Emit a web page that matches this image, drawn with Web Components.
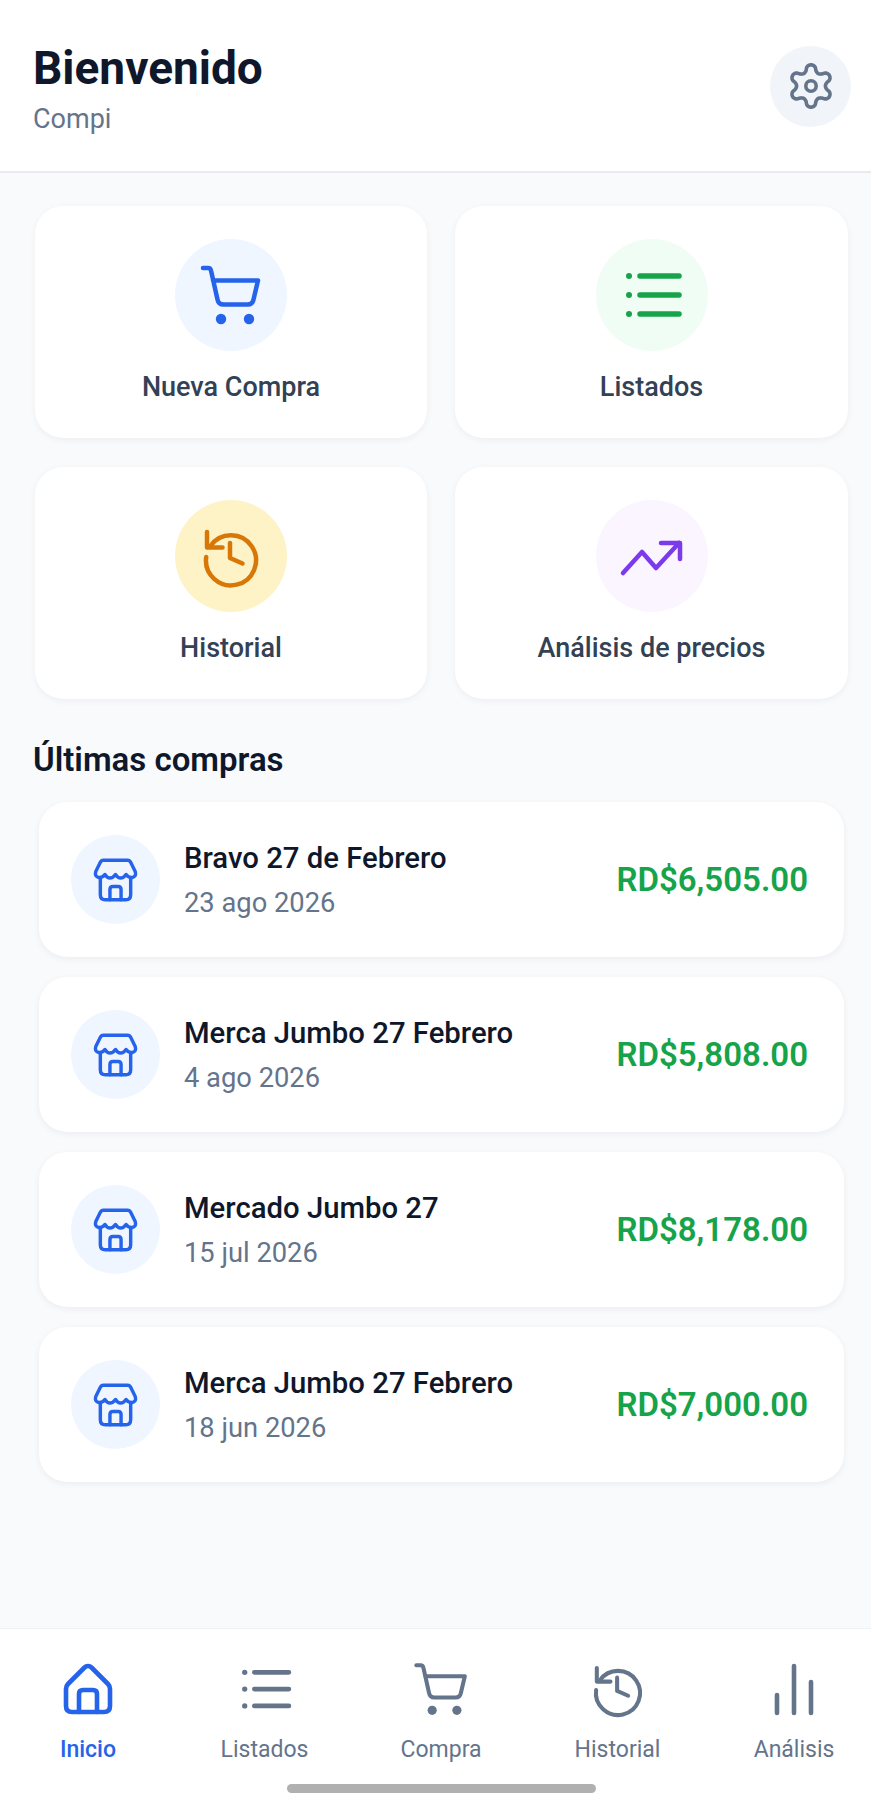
<!DOCTYPE html>
<html lang="es">
<head>
<meta charset="utf-8">
<title>Compi</title>
<style>
  html, body { margin: 0; height: 100%; }
  body { font-family: Roboto, "Liberation Sans", sans-serif; background: #f9fafc; color: #0f172a; }
</style>
</head>
<body>
<app-shell>
  <app-header slot="header" title="Bienvenido" subtitle="Compi"></app-header>

  <action-grid>
    <action-card icon="cart" tone="blue">Nueva Compra</action-card>
    <action-card icon="list" tone="green">Listados</action-card>
    <action-card icon="history" tone="amber">Historial</action-card>
    <action-card icon="trend" tone="purple">Análisis de precios</action-card>
  </action-grid>

  <purchase-list heading="Últimas compras">
    <purchase-row><span slot="name">Bravo 27 de Febrero</span><span slot="date">23 ago 2026</span><span slot="price">RD$6,505.00</span></purchase-row>
    <purchase-row><span slot="name">Merca Jumbo 27 Febrero</span><span slot="date">4 ago 2026</span><span slot="price">RD$5,808.00</span></purchase-row>
    <purchase-row><span slot="name">Mercado Jumbo 27</span><span slot="date">15 jul 2026</span><span slot="price">RD$8,178.00</span></purchase-row>
    <purchase-row><span slot="name">Merca Jumbo 27 Febrero</span><span slot="date">18 jun 2026</span><span slot="price">RD$7,000.00</span></purchase-row>
  </purchase-list>

  <bottom-nav slot="footer">
    <nav-item icon="home" active>Inicio</nav-item>
    <nav-item icon="list">Listados</nav-item>
    <nav-item icon="cart">Compra</nav-item>
    <nav-item icon="history">Historial</nav-item>
    <nav-item icon="bars">Análisis</nav-item>
  </bottom-nav>
</app-shell>

<script>
// rounded six lobe gear, traced in polar form
function gearPath(cx, cy) {
  let d = ''
  for (let i = 0; i < 144; i++) {
    const t = i / 144 * Math.PI * 2
    const c = Math.cos(6 * t)
    const r = 17.8 + 3.4 * Math.sign(c) * Math.pow(Math.abs(c), 0.6)
    const x = cx + r * Math.sin(t)
    const y = cy - r * Math.cos(t)
    d += (i ? 'L' : 'M') + x.toFixed(2) + ' ' + y.toFixed(2)
  }
  return d + 'Z'
}

const icons = {
  cart: {
    view: '0 0 112 112',
    navView: '22 23 68 68',
    body: `<path d="M28 29h5q2.500 0 3 2.500l6.500 29q1 5 6 5h24q5 0 6-5l4.500-19H38"/>
      <circle class="dot" cx="46" cy="80" r="5.200"/><circle class="dot" cx="74" cy="80" r="5.200"/>`
  },
  list: {
    view: '0 0 112 112',
    navView: '22 23 68 68',
    body: `<path style="stroke-width:5.500" d="M44 37h39M44 56h39M44 75h39"/>
      <circle class="dot" cx="33" cy="37" r="3"/><circle class="dot" cx="33" cy="56" r="3"/><circle class="dot" cx="33" cy="75" r="3"/>`
  },
  history: {
    view: '0 0 112 112',
    navView: '22 23 68 68',
    body: `<path d="M35.500 46A25 25 0 1 1 31.200 57"/>
      <path d="M32 32v15.500h15.500"/><path d="M55 43v15l12.500 5.500"/>`
  },
  trend: {
    view: '0 0 112 112',
    body: '<path d="M27 73l19-21 14 16 23-25"/><path d="M65 43h19v16"/>'
  },
  store: {
    view: '0 0 88 88',
    body: `<path d="M32 25h24q2 0 3 2l4.500 9q1.500 5-3 6-3.500.5-6-3-2.500 3.500-5.500 3.500t-5-3.500q-2.500 3.500-5.500 3.500t-5-3.500q-2.500 3.500-6 3-4.500-1-3-6l4.500-9q1-2 3-2Z"/>
      <path d="M29 43v16q0 5 5 5h20q5 0 5-5V43"/>
      <path d="M38.500 64V54q0-3 3-3h5q3 0 3 3v10"/>`
  },
  home: {
    view: '0 0 60 60',
    body: `<path d="M26.500 7.500a5 5 0 0 1 7 0L50 24q2 2 2 5v17q0 6-6 6H14q-6 0-6-6V29q0-3 2-5Z"/>
      <path d="M21 52V34q0-4 4-4h10q4 0 4 4v18"/>`
  },
  bars: {
    view: '0 0 60 60',
    body: '<path d="M13 35v18M30 6v47M47 22v31"/>'
  },
  gear: {
    view: '0 0 60 60',
    body: `<path d="${gearPath(30, 30)}"/><circle cx="30" cy="30" r="5.200"/>`
  }
}

customElements.define('app-icon', class extends HTMLElement {
  connectedCallback() {
    const icon = icons[this.getAttribute('name')]
    const view = this.hasAttribute('nav') && icon.navView ? icon.navView : icon.view
    this.attachShadow({ mode: 'open' }).innerHTML = `
      <style>
        :host { display: block; width: var(--icon-size, 60px); height: var(--icon-size, 60px); }
        svg {
          display: block; width: 100%; height: 100%; fill: none;
          stroke: var(--icon-color, #64748b);
          stroke-width: var(--icon-stroke, 4);
          stroke-linecap: round; stroke-linejoin: round;
        }
        .dot { fill: var(--icon-color, #64748b); stroke: none; }
      </style>
      <svg viewBox="${view}" aria-hidden="true">${icon.body}</svg>`
  }
})

const shellTemplate = document.createElement('template')
shellTemplate.innerHTML = `
<style>
  :host { display: flex; flex-direction: column; height: 1806px; overflow: hidden; }
  main { flex: 1; padding: 33px 22px 0 35px; }
</style>
<slot name="header"></slot>
<main><slot></slot></main>
<slot name="footer"></slot>`

customElements.define('app-shell', class extends HTMLElement {
  constructor() {
    super()
    this.attachShadow({ mode: 'open' })
    this.shadowRoot.appendChild(shellTemplate.content.cloneNode(true))
  }
})

customElements.define('app-header', class extends HTMLElement {
  connectedCallback() {
    this.attachShadow({ mode: 'open' }).innerHTML = `
      <style>
        :host {
          display: flex; align-items: center; justify-content: space-between;
          height: 171px; padding: 0 20px 0 33px; box-sizing: content-box;
          background: #fff; border-bottom: 2px solid #e8eaee;
        }
        h1 { margin: 0; font-size: 46px; line-height: 54px; font-weight: 700; color: #0f172a; }
        p { margin: 8px 0 0; font-size: 27px; line-height: 32px; color: #64748b; }
        .gear {
          width: 81px; height: 81px; border-radius: 50%; background: #f1f5f9;
          margin-top: 1px;
          display: flex; align-items: center; justify-content: center;
          --icon-size: 60px; --icon-stroke: 3.6; --icon-color: #64748b;
        }
        .text { padding-top: 4px; }
      </style>
      <div class="text">
        <h1>${this.getAttribute('title')}</h1>
        <p>${this.getAttribute('subtitle')}</p>
      </div>
      <div class="gear"><app-icon name="gear"></app-icon></div>`
  }
})

customElements.define('action-grid', class extends HTMLElement {
  constructor() {
    super()
    this.attachShadow({ mode: 'open' }).innerHTML = `
      <style>
        :host { display: grid; grid-template-columns: 392px 393px; gap: 28.500px 28px; }
      </style>
      <slot></slot>`
  }
})

const tones = {
  blue: ['#eff6ff', '#2563eb'],
  green: ['#f0fdf4', '#16a34a'],
  amber: ['#fef3c7', '#d97706'],
  purple: ['#faf5ff', '#7c3aed']
}

customElements.define('action-card', class extends HTMLElement {
  connectedCallback() {
    const [bg, fg] = tones[this.getAttribute('tone')]
    this.attachShadow({ mode: 'open' }).innerHTML = `
      <style>
        :host {
          display: flex; flex-direction: column; align-items: center;
          height: 232px; padding-top: 33px; box-sizing: border-box;
          background: #fff; border-radius: 28px;
          box-shadow: 0 2px 7px rgba(15, 23, 42, .05);
        }
        .bubble { width: 112px; height: 112px; border-radius: 50%; background: ${bg}; --icon-size: 112px; --icon-color: ${fg}; --icon-stroke: 4.5; }
        .label { margin-top: 20px; font-size: 27px; line-height: 32px; font-weight: 500; color: #334155; white-space: nowrap; }
      </style>
      <div class="bubble"><app-icon name="${this.getAttribute('icon')}"></app-icon></div>
      <div class="label"><slot></slot></div>`
  }
})

customElements.define('purchase-list', class extends HTMLElement {
  connectedCallback() {
    this.attachShadow({ mode: 'open' }).innerHTML = `
      <style>
        :host { display: block; margin-left: -2px; }
        h2 { margin: 43px 0 24px; font-size: 33px; line-height: 36px; font-weight: 600; color: #0f172a; }
        .rows { display: flex; flex-direction: column; gap: 20px; margin-left: 6px; }
      </style>
      <h2>${this.getAttribute('heading')}</h2>
      <div class="rows"><slot></slot></div>`
  }
})

customElements.define('purchase-row', class extends HTMLElement {
  constructor() {
    super()
    this.attachShadow({ mode: 'open' }).innerHTML = `
      <style>
        :host {
          display: flex; align-items: center; width: 805px; height: 155px;
          padding: 0 36px 0 32px; box-sizing: border-box;
          background: #fff; border-radius: 28px;
          box-shadow: 0 2px 7px rgba(15, 23, 42, .06);
        }
        .bubble { width: 89px; height: 89px; border-radius: 50%; background: #eff6ff; flex: none; --icon-size: 89px; --icon-color: #2563eb; --icon-stroke: 3.4; }
        .info { flex: 1; margin-left: 24px; padding-top: 3px; display: flex; flex-direction: column; gap: 12px; }
        .name { font-size: 29.300px; line-height: 33px; font-weight: 500; color: #0f172a; }
        .date { font-size: 27.300px; line-height: 32px; color: #64748b; }
        .price { font-size: 33px; font-weight: 600; color: #16a34a; }
      </style>
      <div class="bubble"><app-icon name="store"></app-icon></div>
      <div class="info">
        <div class="name"><slot name="name"></slot></div>
        <div class="date"><slot name="date"></slot></div>
      </div>
      <div class="price"><slot name="price"></slot></div>`
  }
})

customElements.define('bottom-nav', class extends HTMLElement {
  constructor() {
    super()
    this.attachShadow({ mode: 'open' }).innerHTML = `
      <style>
        :host {
          display: block; height: 178px; box-sizing: border-box;
          background: #fff; border-top: 1px solid #eef1f5;
        }
        .items { display: flex; justify-content: space-between; padding: 31px 17px 0 28px; }
        .grip { width: 309px; height: 9px; margin: 20px 0 0 287px; border-radius: 5px; background: #b0b0b0; }
      </style>
      <div class="items"><slot></slot></div>
      <div class="grip"></div>`
  }
})

customElements.define('nav-item', class extends HTMLElement {
  connectedCallback() {
    const active = this.hasAttribute('active')
    this.attachShadow({ mode: 'open' }).innerHTML = `
      <style>
        :host {
          display: flex; flex-direction: column; align-items: center; width: 120px;
          --icon-color: ${active ? '#2563eb' : '#64748b'}; --icon-size: 60px; --icon-stroke: 4.6;
        }
        .label { margin-top: 16px; font-size: 23px; line-height: 28px; font-weight: ${active ? 500 : 400}; color: ${active ? '#2563eb' : '#64748b'}; }
      </style>
      <app-icon name="${this.getAttribute('icon')}" nav></app-icon>
      <div class="label"><slot></slot></div>`
  }
})
</script>
</body>
</html>
